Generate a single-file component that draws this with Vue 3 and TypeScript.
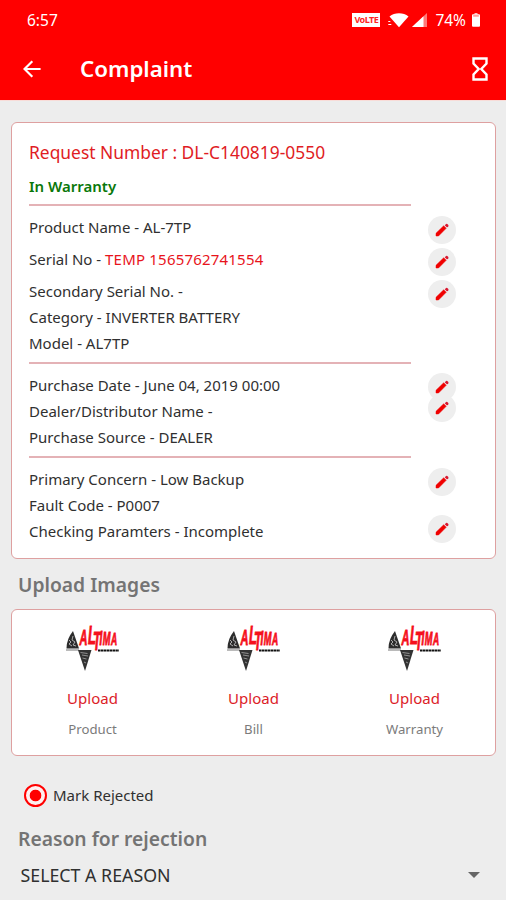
<script setup lang="ts">
interface Line { label: string; value?: string; tall?: boolean }
interface Section { name: string; lines: Line[]; edits: number }

const sections: Section[] = [
  {
    name: 'product',
    lines: [
      { label: 'Product Name - AL-7TP', tall: true },
      { label: 'Serial No - ', value: 'TEMP 1565762741554', tall: true },
      { label: 'Secondary Serial No. -' },
      { label: 'Category - INVERTER BATTERY' },
      { label: 'Model - AL7TP' },
    ],
    edits: 3,
  },
  {
    name: 'purchase',
    lines: [
      { label: 'Purchase Date - June 04, 2019 00:00' },
      { label: 'Dealer/Distributor Name -' },
      { label: 'Purchase Source - DEALER' },
    ],
    edits: 2,
  },
  {
    name: 'concern',
    lines: [
      { label: 'Primary Concern - Low Backup' },
      { label: 'Fault Code - P0007' },
      { label: 'Checking Paramters - Incomplete' },
    ],
    edits: 2,
  },
]

const uploads: string[] = ['Product', 'Bill', 'Warranty']
</script>

<template>
  <div class="screen">
    <header class="top">
      <div class="status">
        <span class="clock">6:57</span>
        <span class="volte">VoLTE</span>
        <svg class="wifi" viewBox="0 0 22 16" width="22" height="16">
          <path d="M1.500 4.600C6.500.2 15.500.2 20.500 4.600L11 15.300Z" fill="#fff" />
          <path d="M.3 9.500h2M.3 12.500h3" stroke="#fff" stroke-width="1.200" />
        </svg>
        <svg class="signal" viewBox="0 0 16 14" width="16" height="14">
          <path d="M0 14L15 0V14Z" fill="#ff7a7a" />
          <path d="M0 14L11.500 3.300V14Z" fill="#fff" />
        </svg>
        <span class="percent">74%</span>
        <svg class="battery" viewBox="0 0 8 14" width="8" height="14">
          <path d="M2.500 0h3v1.500h-3z" fill="#ffc0c0" />
          <rect x="0" y="1.200" width="8" height="12.600" rx="1" fill="#fff" />
          <path d="M1.200 2.200h5.600v1.400H1.200z" fill="#ff8a8a" />
        </svg>
      </div>
      <div class="bar">
        <svg class="back" viewBox="0 0 18 18" width="18" height="18">
          <path d="M17.600 9H1.800M9.300 1.200L1.500 9l7.800 7.800" fill="none" stroke="#fff" stroke-width="2.200" />
        </svg>
        <h1>Complaint</h1>
        <svg class="hourglass" viewBox="0 0 16 24" width="16" height="24">
          <path d="M1.500 1.500h13v5L9.300 12l5.200 5.500v5h-13v-5L6.700 12 1.500 6.500z" fill="none" stroke="#fff" stroke-width="2.400" />
        </svg>
      </div>
    </header>

    <main>
      <section class="card details">
        <h2 class="request">Request Number : DL-C140819-0550</h2>
        <p class="warranty">In Warranty</p>
        <div v-for="s in sections" :key="s.name" class="group" :class="s.name">
          <div class="lines">
            <p v-for="l in s.lines" :key="l.label" :class="{ tall: l.tall }">{{ l.label }}<span v-if="l.value" class="red">{{ l.value }}</span></p>
          </div>
          <div class="edits">
            <button v-for="n in s.edits" :key="n" class="edit" aria-label="Edit">
              <svg viewBox="0 0 14 14" width="14" height="14">
                <path d="M1 10.300L8.700 2.800l2.500 2.500L3.500 13H1z" fill="#f00000" stroke="#f00000" stroke-width=".5" />
                <path d="M9.700 2.200l1.400-1.300q.6-.4 1.200.1l1 1q.4.600 0 1.200L12 4.500z" fill="#d81830" />
              </svg>
            </button>
          </div>
        </div>
      </section>

      <h3 class="heading images">Upload Images</h3>
      <section class="card uploads">
        <div v-for="u in uploads" :key="u" class="upload">
          <svg class="logo" viewBox="0 0 54 50" width="54" height="50">
            <path d="M7 8L13 25.500H0.500Q.5 16 7 8Z" fill="#2c2c2c" />
            <path d="M3 17l2 2-2 2 3 2M7 13l-1 4 3 2-2 3 3 1" stroke="#ccc" stroke-width=".8" fill="none" />
            <path d="M0 27h13" stroke="#777" stroke-width="1" />
            <path d="M12 27H25.500L19 48Z" fill="#333" />
            <path d="M14.500 29.500l7 1M16 32l6 1M16.500 35l4 1M18 39l2 1" stroke="#aaa" stroke-width=".8" />
            <text class="brand" transform="scale(.5 1)"><tspan x="27" y="22" font-size="22">A</tspan><tspan x="44" y="21" font-size="26">L</tspan><tspan x="54" y="27" font-size="25">T</tspan><tspan x="67" y="22" font-size="20">I</tspan><tspan x="73.500" y="22" font-size="18.500">M</tspan><tspan x="90" y="22.500" font-size="17">A</tspan></text>
            <path d="M32 27.500H53" stroke="#111" stroke-width="2" stroke-dasharray="2.500 .4" />
          </svg>
          <span class="action">Upload</span>
          <span class="caption">{{ u }}</span>
        </div>
      </section>

      <label class="reject">
        <span class="radio"></span>
        <span>Mark Rejected</span>
      </label>
      <h3 class="heading reason">Reason for rejection</h3>
      <div class="select">
        <span>SELECT A REASON</span>
        <svg viewBox="0 0 12 6" width="12" height="6"><path d="M0 0h12L6 6z" fill="#666" /></svg>
      </div>
    </main>
  </div>
</template>

<style>
body { background: #ededed; }
</style>

<style scoped>
.screen {
  width: 506px;
  height: 900px;
  overflow: hidden;
  background: #ededed;
  color: #303030;
  font: 15px/26px "Noto Sans", sans-serif;
}
h1, h2, h3, p { margin: 0; }
.top {
  box-sizing: border-box;
  height: 101px;
  border-bottom: 1px solid #f8dcd8;
  background: #ff0000;
  color: #fff;
}
.status {
  display: flex;
  align-items: center;
  height: 39px;
  padding: 0 26px 0 27px;
  font-size: 15.5px;
}
.clock { margin-right: auto; }
.volte {
  width: 28px;
  height: 14px;
  background: #fff;
  color: #f22;
  font: 700 9px/14px "Noto Sans", sans-serif;
  letter-spacing: -.5px;
  text-align: center;
}
.wifi { margin-left: 8px; }
.signal { margin-left: 2px; }
.percent { margin-left: 7px; }
.battery { margin-left: 6px; }
.bar {
  display: flex;
  align-items: center;
  height: 60px;
  padding: 0 18px 0 23px;
}
.bar h1 {
  flex: 1;
  margin-left: 39px;
  font-size: 22.3px;
  font-weight: 600;
}
.card {
  box-sizing: border-box;
  width: 485px;
  margin-left: 11px;
  border: 1px solid #dea0a0;
  border-radius: 6px;
  background: #fff;
}
.details {
  height: 437px;
  margin-top: 21px;
  padding: 16px 39px 0 17px;
}
.request {
  color: #e01c24;
  font-size: 17.4px;
  font-weight: 400;
  line-height: 26px;
}
.warranty {
  box-sizing: border-box;
  height: 39px;
  padding-top: 8px;
  color: #0a780a;
  font-weight: 600;
}
.group {
  display: flex;
  justify-content: space-between;
}
.lines {
  box-sizing: border-box;
  width: 382px;
  border-top: 2px solid #e4b2b6;
  padding-top: 8px;
}
.product { height: 158px; }
.purchase { height: 94px; }
.purchase .lines, .concern .lines { padding-top: 7.500px; }
.tall { margin-bottom: 6px; }
.red { color: #e8141c; letter-spacing: .2px; }
.lines p { white-space: pre; }
.edits {
  display: flex;
  flex-direction: column;
}
.product .edits { padding-top: 12px; gap: 4px; }
.purchase .edits { padding-top: 11px; }
.purchase .edit + .edit { margin-top: -7px; }
.concern .edits { padding-top: 12px; gap: 19px; }
.edit {
  display: grid;
  place-items: center;
  width: 28px;
  height: 28px;
  padding: 0;
  border: 0;
  border-radius: 50%;
  background: #eeeeee;
}
.heading {
  margin-left: 18px;
  color: #747474;
  font-size: 19.3px;
  font-weight: 600;
  line-height: 28px;
}
.images { margin-top: 12px; }
.uploads {
  display: grid;
  grid-template-columns: repeat(3, 161px);
  height: 147px;
  margin-top: 10px;
}
.upload {
  display: flex;
  flex-direction: column;
  align-items: center;
  padding-top: 13px;
}
.logo { overflow: visible; }
.brand {
  fill: #f5101c;
  stroke: #f5101c;
  stroke-width: .9px;
  font-family: "Liberation Sans", sans-serif;
  font-weight: 700;
  font-style: italic;
}
.action { margin-top: 12px; color: #dc1c28; }
.caption { margin-top: 5px; color: #7b7b7b; font-size: 13.200px; }
.reject {
  display: flex;
  align-items: center;
  gap: 6px;
  height: 26px;
  margin: 26px 0 0 24px;
}
.radio {
  box-sizing: border-box;
  width: 23px;
  height: 23px;
  border: 2px solid #ff0000;
  border-radius: 50%;
  background: radial-gradient(circle, #ff0000 5.400px, #fff0f0 6.200px);
}
.reason { margin-top: 17px; }
.select {
  display: flex;
  align-items: center;
  justify-content: space-between;
  height: 28px;
  margin: 8px 26px 0 20.500px;
  font-size: 17.800px;
}
</style>
